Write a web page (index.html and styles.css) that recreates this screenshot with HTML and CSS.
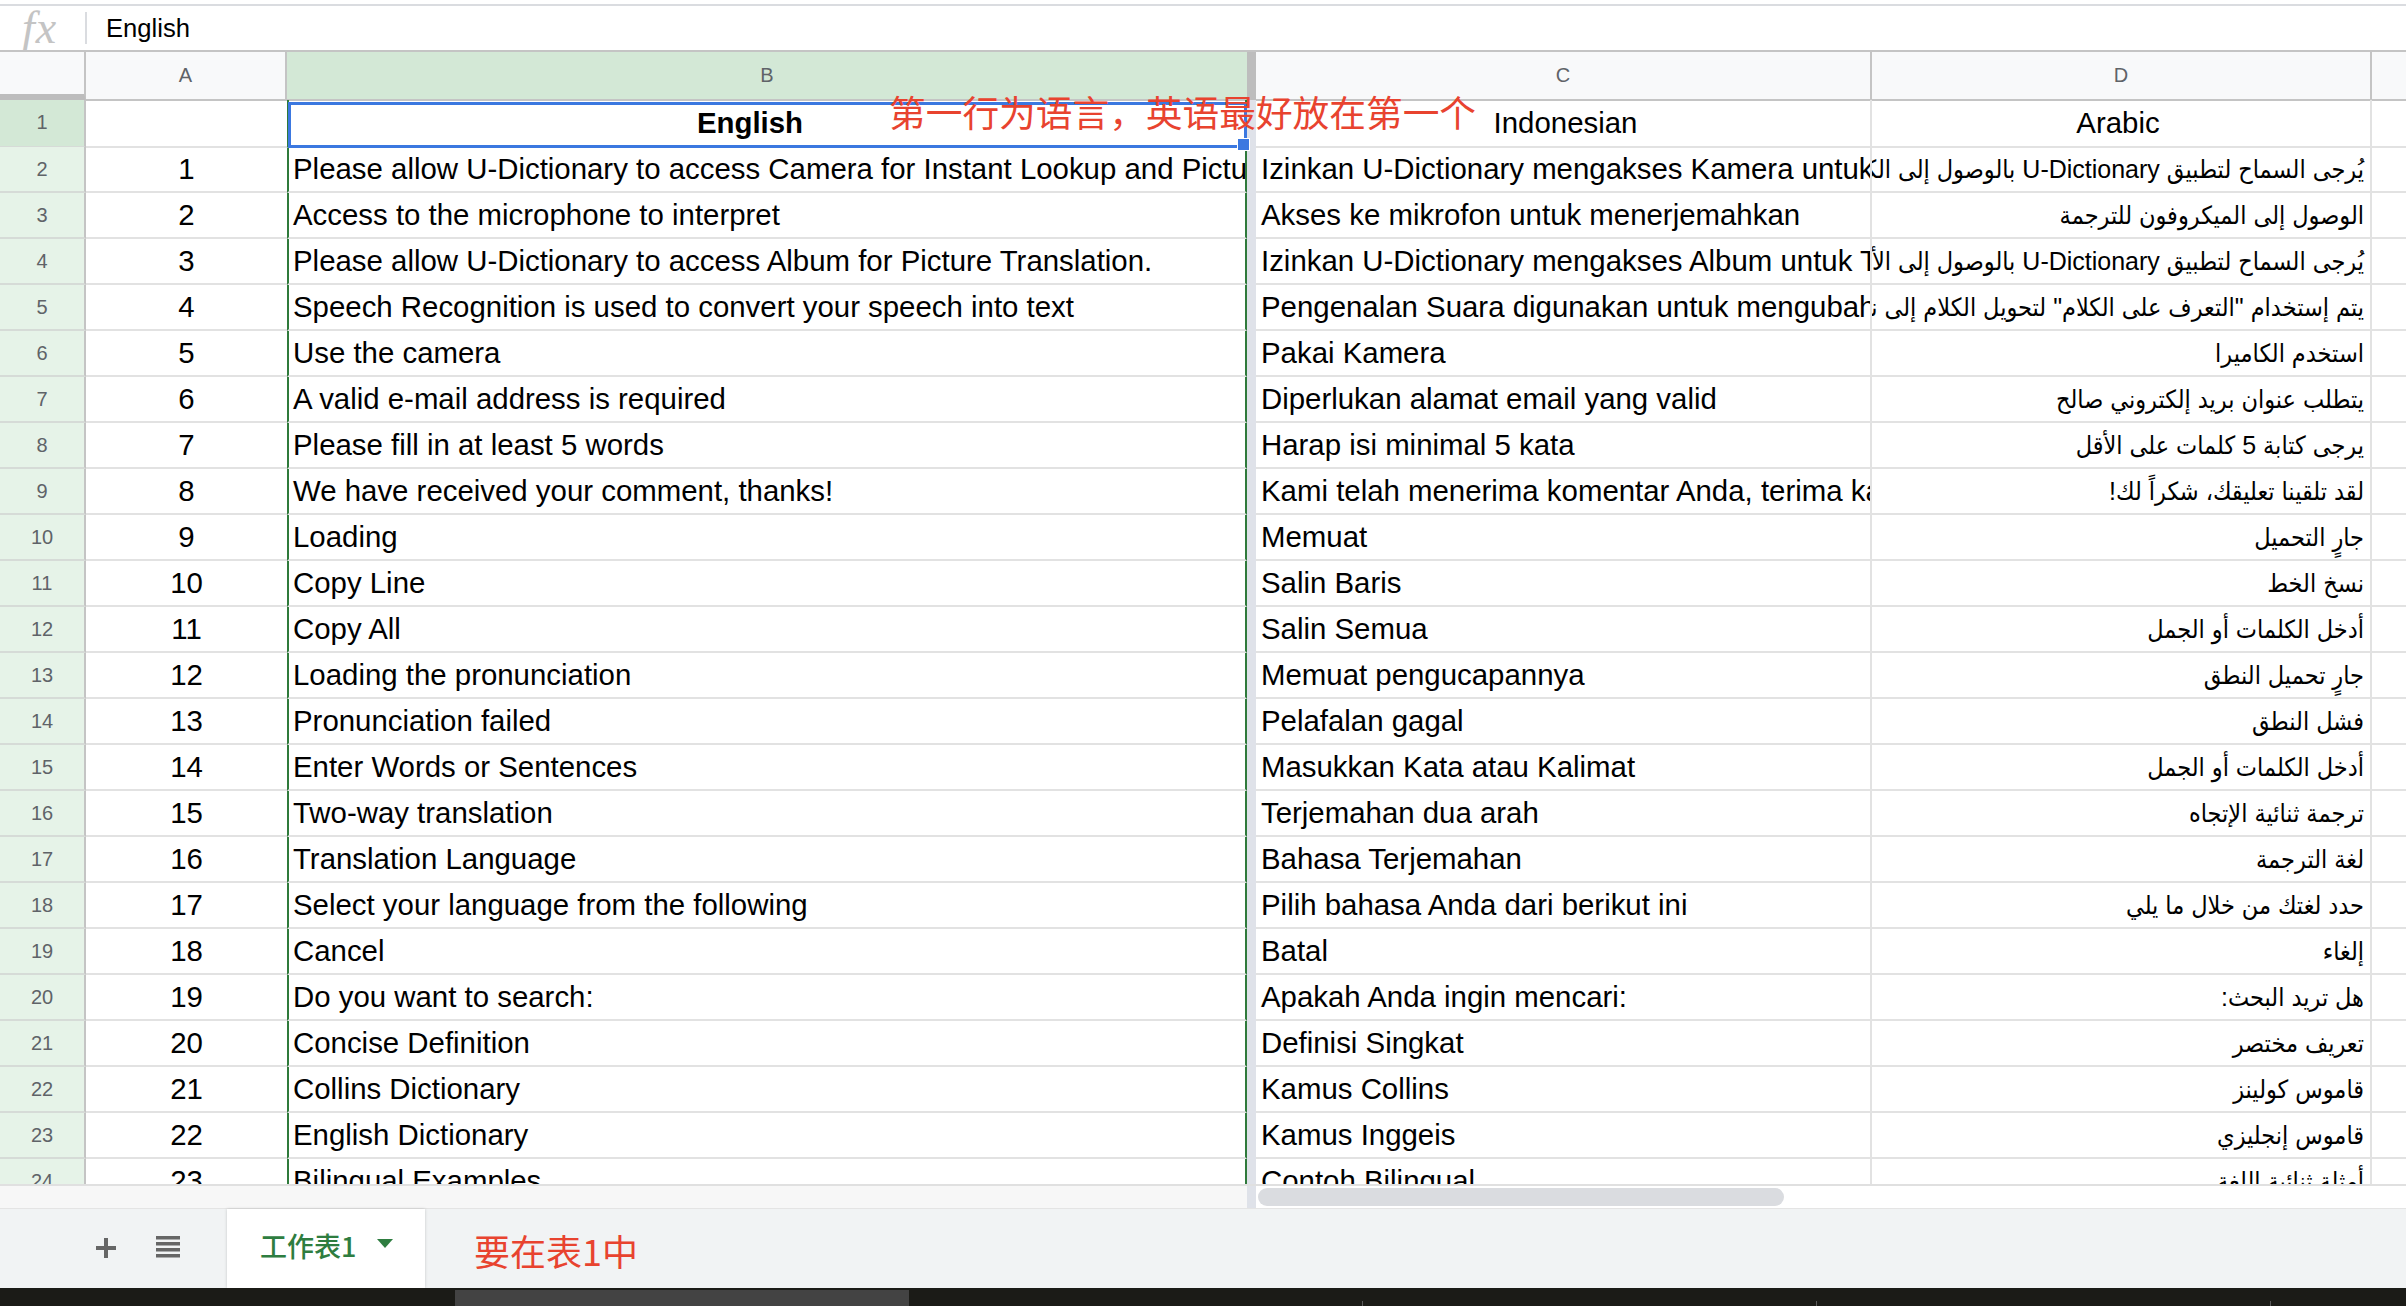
FILE: index.html
```html
<!DOCTYPE html>
<html lang="zh">
<head>
<meta charset="utf-8">
<title>Sheet</title>
<link rel="stylesheet" href="styles.css">
</head>
<body>
<div class="app">
  <div class="topline"></div>
  <div class="fbar">
    <span class="fx">fx</span>
    <span class="fsep"></span>
    <span class="ftext">English</span>
  </div>
  <div class="grid">
    <div class="row head">
      <div class="corner"></div>
      <div class="ch">A</div>
      <div class="ch chsel">B</div>
      <div class="chfreeze"></div>
      <div class="ch">C</div>
      <div class="ch">D</div>
      <div class="ch chlast"></div>
    </div>
    <div class="row first">
      <div class="rh rhsel">1</div>
      <div class="c ca"></div>
      <div class="c cb cb1"><b>English</b><span class="sel"><span class="handle"></span></span></div>
      <div class="freeze"></div>
      <div class="c cc ctr">Indonesian</div>
      <div class="c cd ctr">Arabic</div>
      <div class="c ce"></div>
    </div>
    <div class="row"><div class="rh">2</div><div class="c ca">1</div><div class="c cb">Please allow U-Dictionary to access Camera for Instant Lookup and Picture Translation.</div><div class="freeze"></div><div class="c cc">Izinkan U-Dictionary mengakses Kamera untuk Pencarian Instan dan Terjemahan Gambar.</div><div class="c cd ar" dir="rtl">يُرجى السماح لتطبيق U-Dictionary بالوصول إلى الكاميرا للبحث الفوري وترجمة الصور.</div><div class="c ce"></div></div>
    <div class="row"><div class="rh">3</div><div class="c ca">2</div><div class="c cb">Access to the microphone to interpret</div><div class="freeze"></div><div class="c cc">Akses ke mikrofon untuk menerjemahkan</div><div class="c cd ar" dir="rtl">الوصول إلى الميكروفون للترجمة</div><div class="c ce"></div></div>
    <div class="row"><div class="rh">4</div><div class="c ca">3</div><div class="c cb">Please allow U-Dictionary to access Album for Picture Translation.</div><div class="freeze"></div><div class="c cc">Izinkan U-Dictionary mengakses Album untuk Terjemahan Gambar.</div><div class="c cd ar" dir="rtl">يُرجى السماح لتطبيق U-Dictionary بالوصول إلى الألبوم لترجمة الصور.</div><div class="c ce"></div></div>
    <div class="row"><div class="rh">5</div><div class="c ca">4</div><div class="c cb">Speech Recognition is used to convert your speech into text</div><div class="freeze"></div><div class="c cc">Pengenalan Suara digunakan untuk mengubah ucapan Anda menjadi teks</div><div class="c cd ar" dir="rtl">يتم إستخدام "التعرف على الكلام" لتحويل الكلام إلى نص</div><div class="c ce"></div></div>
    <div class="row"><div class="rh">6</div><div class="c ca">5</div><div class="c cb">Use the camera</div><div class="freeze"></div><div class="c cc">Pakai Kamera</div><div class="c cd ar" dir="rtl">استخدم الكاميرا</div><div class="c ce"></div></div>
    <div class="row"><div class="rh">7</div><div class="c ca">6</div><div class="c cb">A valid e-mail address is required</div><div class="freeze"></div><div class="c cc">Diperlukan alamat email yang valid</div><div class="c cd ar" dir="rtl">يتطلب عنوان بريد إلكتروني صالح</div><div class="c ce"></div></div>
    <div class="row"><div class="rh">8</div><div class="c ca">7</div><div class="c cb">Please fill in at least 5 words</div><div class="freeze"></div><div class="c cc">Harap isi minimal 5 kata</div><div class="c cd ar" dir="rtl">يرجى كتابة 5 كلمات على الأقل</div><div class="c ce"></div></div>
    <div class="row"><div class="rh">9</div><div class="c ca">8</div><div class="c cb">We have received your comment, thanks!</div><div class="freeze"></div><div class="c cc">Kami telah menerima komentar Anda, terima kasih!</div><div class="c cd ar" dir="rtl">لقد تلقينا تعليقك، شكراً لك!</div><div class="c ce"></div></div>
    <div class="row"><div class="rh">10</div><div class="c ca">9</div><div class="c cb">Loading</div><div class="freeze"></div><div class="c cc">Memuat</div><div class="c cd ar" dir="rtl">جارٍ التحميل</div><div class="c ce"></div></div>
    <div class="row"><div class="rh">11</div><div class="c ca">10</div><div class="c cb">Copy Line</div><div class="freeze"></div><div class="c cc">Salin Baris</div><div class="c cd ar" dir="rtl">نسخ الخط</div><div class="c ce"></div></div>
    <div class="row"><div class="rh">12</div><div class="c ca">11</div><div class="c cb">Copy All</div><div class="freeze"></div><div class="c cc">Salin Semua</div><div class="c cd ar" dir="rtl">أدخل الكلمات أو الجمل</div><div class="c ce"></div></div>
    <div class="row"><div class="rh">13</div><div class="c ca">12</div><div class="c cb">Loading the pronunciation</div><div class="freeze"></div><div class="c cc">Memuat pengucapannya</div><div class="c cd ar" dir="rtl">جارٍ تحميل النطق</div><div class="c ce"></div></div>
    <div class="row"><div class="rh">14</div><div class="c ca">13</div><div class="c cb">Pronunciation failed</div><div class="freeze"></div><div class="c cc">Pelafalan gagal</div><div class="c cd ar" dir="rtl">فشل النطق</div><div class="c ce"></div></div>
    <div class="row"><div class="rh">15</div><div class="c ca">14</div><div class="c cb">Enter Words or Sentences</div><div class="freeze"></div><div class="c cc">Masukkan Kata atau Kalimat</div><div class="c cd ar" dir="rtl">أدخل الكلمات أو الجمل</div><div class="c ce"></div></div>
    <div class="row"><div class="rh">16</div><div class="c ca">15</div><div class="c cb">Two-way translation</div><div class="freeze"></div><div class="c cc">Terjemahan dua arah</div><div class="c cd ar" dir="rtl">ترجمة ثنائية الإتجاه</div><div class="c ce"></div></div>
    <div class="row"><div class="rh">17</div><div class="c ca">16</div><div class="c cb">Translation Language</div><div class="freeze"></div><div class="c cc">Bahasa Terjemahan</div><div class="c cd ar" dir="rtl">لغة الترجمة</div><div class="c ce"></div></div>
    <div class="row"><div class="rh">18</div><div class="c ca">17</div><div class="c cb">Select your language from the following</div><div class="freeze"></div><div class="c cc">Pilih bahasa Anda dari berikut ini</div><div class="c cd ar" dir="rtl">حدد لغتك من خلال ما يلي</div><div class="c ce"></div></div>
    <div class="row"><div class="rh">19</div><div class="c ca">18</div><div class="c cb">Cancel</div><div class="freeze"></div><div class="c cc">Batal</div><div class="c cd ar" dir="rtl">إلغاء</div><div class="c ce"></div></div>
    <div class="row"><div class="rh">20</div><div class="c ca">19</div><div class="c cb">Do you want to search:</div><div class="freeze"></div><div class="c cc">Apakah Anda ingin mencari:</div><div class="c cd ar" dir="rtl">هل تريد البحث:</div><div class="c ce"></div></div>
    <div class="row"><div class="rh">21</div><div class="c ca">20</div><div class="c cb">Concise Definition</div><div class="freeze"></div><div class="c cc">Definisi Singkat</div><div class="c cd ar" dir="rtl">تعريف مختصر</div><div class="c ce"></div></div>
    <div class="row"><div class="rh">22</div><div class="c ca">21</div><div class="c cb">Collins Dictionary</div><div class="freeze"></div><div class="c cc">Kamus Collins</div><div class="c cd ar" dir="rtl">قاموس كولينز</div><div class="c ce"></div></div>
    <div class="row"><div class="rh">23</div><div class="c ca">22</div><div class="c cb">English Dictionary</div><div class="freeze"></div><div class="c cc">Kamus Inggeis</div><div class="c cd ar" dir="rtl">قاموس إنجليزي</div><div class="c ce"></div></div>
    <div class="row"><div class="rh">24</div><div class="c ca">23</div><div class="c cb">Bilingual Examples</div><div class="freeze"></div><div class="c cc">Contoh Bilingual</div><div class="c cd ar" dir="rtl">أمثلة ثنائية اللغة</div><div class="c ce"></div></div>
  </div>
  <div class="hscroll">
    <div class="hs-left"></div>
    <div class="hs-freeze"></div>
    <div class="hs-right"><div class="thumb"></div></div>
  </div>
  <div class="tabs">
    <svg class="ico-plus" width="22" height="22" viewBox="0 0 22 22"><path d="M11 1v20M1 11h20" stroke="#666" stroke-width="4"/></svg>
    <svg class="ico-list" width="24" height="22" viewBox="0 0 24 22"><rect y="0" width="24" height="3.5" fill="#666"/><rect y="6" width="24" height="3.5" fill="#666"/><rect y="12" width="24" height="3.5" fill="#666"/><rect y="18" width="24" height="3.5" fill="#666"/></svg>
    <div class="tab">
      <span class="tab-name">工作表1</span>
      <svg class="tab-caret" width="16" height="9" viewBox="0 0 16 9"><path d="M0 0h16L8 9z" fill="#2e7d40"/></svg>
    </div>
    <span class="note2">要在表1中</span>
  </div>
  <div class="taskbar">
    <div class="tb-block"></div>
    <div class="tick"></div>
    <div class="tick"></div>
    <div class="tick"></div>
  </div>
  <div class="note1">第一行为语言，英语最好放在第一个</div>
</div>
</body>
</html>
```

FILE: styles.css
```css
* { box-sizing: border-box; }
html, body { margin: 0; padding: 0; background: #fff; }
body { font-family: "Liberation Sans", Arial, "DejaVu Sans", sans-serif; color: #000; }

.app {
  position: relative;
  width: 2406px;
  height: 1306px;
  overflow: hidden;
  display: flex;
  flex-direction: column;
}

.topline { flex: none; height: 6px; border-bottom: 2px solid #dadce0; }

.fbar {
  flex: none;
  height: 46px;
  border-bottom: 2px solid #c4c4c4;
  display: flex;
  align-items: center;
}
.fx {
  width: 85px;
  padding-left: 22px;
  font-family: "Liberation Serif", "DejaVu Serif", serif;
  font-style: italic;
  font-size: 46px;
  line-height: 40px;
  color: #c4c4c4;
  letter-spacing: 1px;
}
.fsep { width: 2px; height: 32px; background: #dadce0; }
.ftext { margin-left: 19px; font-size: 25.6px; color: #000; }

.grid { flex: none; height: 1132px; overflow: hidden; }

.row {
  display: grid;
  grid-template-columns: 86px 201px 960px 9px 616px 500px 34px;
  height: 46px;
}
.row.head { height: 48px; }
.row.first { height: 47px; }

.corner {
  background: #f8f9fa;
  border-right: 2px solid #c4c4c4;
  border-bottom: 7px solid #bdbdbd;
}
.ch {
  background: #f8f9fa;
  border-right: 2px solid #c4c4c4;
  border-bottom: 2px solid #c4c4c4;
  font-size: 20px;
  line-height: 47px;
  text-align: center;
  color: #5f6368;
}
.ch.chsel { background: #d3e8d6; border-right: none; }
.ch.chlast { border-right: none; }
.chfreeze { background: #bdbdbd; }

.rh {
  background: #e6f3e8;
  border-right: 2px solid #c4c4c4;
  border-bottom: 2px solid #d6dbd7;
  font-size: 20px;
  line-height: 44px;
  text-align: center;
  color: #5f6368;
}
.rh.rhsel { background: #d3e8d6; line-height: 45px; }

.c {
  border-bottom: 2px solid #e2e2e2;
  border-right: 2px solid #e2e2e2;
  font-size: 29.4px;
  line-height: 44px;
  white-space: nowrap;
  overflow: hidden;
  padding: 0 5px;
}
.row.first .c { line-height: 46px; }
.ca { text-align: center; border-right: none; padding: 0; }
.cb { border-left: 2px solid #2f7a3b; border-right: 2px solid #2f7a3b; padding-left: 4px; padding-right: 0; }
.cc { padding-left: 5px; padding-right: 0; }
.cd { text-align: right; padding-right: 6px; padding-left: 0; }
.cd.ar { font-family: "Liberation Sans", "DejaVu Sans Condensed", "DejaVu Sans", sans-serif; font-size: 25px; }
.ce { border-right: none; }
.ctr { text-align: center; }
.freeze { background: #dfe2e9; }

.cb1 { position: relative; overflow: visible; text-align: center; padding-right: 38px; }
.cb1 b { font-weight: bold; }
.sel {
  position: absolute;
  left: -1px;
  right: -2px;
  top: 2px;
  bottom: -2px;
  border: 3px solid #3b78e0;
  z-index: 2;
}
.handle {
  position: absolute;
  right: -6px;
  bottom: -6px;
  width: 13px;
  height: 13px;
  background: #3b78e0;
  border: 1px solid #fff;
}

.hscroll {
  flex: none;
  height: 24px;
  border-top: 2px solid #e0e0e0;
  display: grid;
  grid-template-columns: 1247px 9px 1fr;
}
.hs-left { background: #f7f7f7; }
.hs-freeze { background: #dfe2e9; }
.hs-right { background: #fff; padding: 2px 0 0 2px; }
.thumb { width: 526px; height: 18px; border-radius: 9px; background: #dadce0; }

.tabs {
  flex: none;
  height: 80px;
  background: #f1f3f4;
  border-top: 1px solid #e4e4e4;
  display: flex;
  align-items: center;
  padding-left: 95px;
}
.ico-plus { flex: none; margin-top: -2px; }
.ico-list { flex: none; margin-left: 39px; margin-top: -3px; }
.tab {
  flex: none;
  align-self: stretch;
  margin-left: 47px;
  width: 198px;
  background: #fff;
  box-shadow: 0 0 3px rgba(0,0,0,0.18);
  display: flex;
  align-items: center;
  padding-left: 33px;
  padding-bottom: 7px;
}
.tab-name {
  font-family: "Noto Sans CJK SC", "Liberation Sans", sans-serif;
  font-size: 27px;
  font-weight: 500;
  color: #2e7d40;
  line-height: 1;
}
.tab-caret { margin-left: 21px; margin-top: -4px; }
.note2 {
  margin-left: 49px;
  margin-top: 2px;
  font-family: "Noto Sans CJK SC", "Liberation Sans", sans-serif;
  font-size: 36px;
  color: #e8432f;
  line-height: 1;
}

.taskbar {
  flex: none;
  height: 18px;
  background: #1b1b17;
  display: flex;
  padding-left: 455px;
}
.tb-block { width: 454px; margin-top: 2px; background: #434343; }
.tick { width: 1px; height: 5px; align-self: flex-end; margin-left: 453px; background: #5a5a5a; }

.note1 {
  position: absolute;
  left: 889px;
  top: 93px;
  font-family: "Noto Sans CJK SC", "Liberation Sans", sans-serif;
  font-size: 36.7px;
  line-height: 36px;
  color: #e8432f;
  white-space: nowrap;
  z-index: 5;
}
```
